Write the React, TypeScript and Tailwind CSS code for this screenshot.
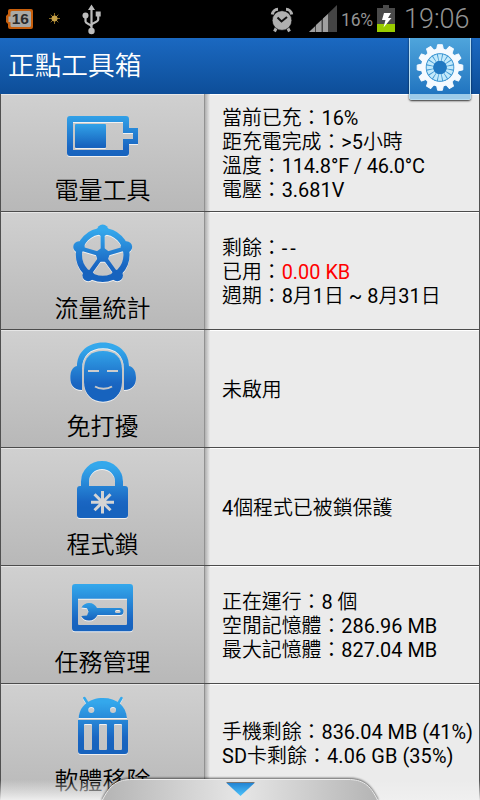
import type { ReactNode } from 'react'

const Icon = ({ children }: { children: ReactNode }) => (
  <svg width="80" height="66" viewBox="0 0 80 66" className="block drop-shadow-[0_1px_0_rgba(255,255,255,0.75)]">
    {children}
  </svg>
)

const Grad = () => (
  <svg width="0" height="0" className="absolute">
    <defs>
      <linearGradient id="blue" gradientUnits="userSpaceOnUse" x1="0" y1="6" x2="0" y2="48">
        <stop offset="0" stopColor="#34a8ec" />
        <stop offset="0.85" stopColor="#1a66c2" />
        <stop offset="1" stopColor="#1763be" />
      </linearGradient>
      <linearGradient id="blueFill" gradientUnits="userSpaceOnUse" x1="0" y1="16" x2="0" y2="40">
        <stop offset="0" stopColor="#34a8ec" />
        <stop offset="1" stopColor="#1763be" />
      </linearGradient>
      <linearGradient id="blueTool" gradientUnits="userSpaceOnUse" x1="0" y1="25" x2="0" y2="42">
        <stop offset="0" stopColor="#2f9fe6" />
        <stop offset="1" stopColor="#1763be" />
      </linearGradient>
    </defs>
  </svg>
)

const BatteryIcon = () => (
  <Icon>
    <path fill="url(#blue)" fillRule="evenodd" d="M7 10H63a3 3 0 0 1 3 3V22H75V38H66V47a3 3 0 0 1-3 3H7a3 3 0 0 1-3-3V13a3 3 0 0 1 3-3ZM10 16V44H60V33H70V27H60V16Z" />
    <rect x="12" y="18" width="31" height="24" rx="1" fill="url(#blueFill)" />
  </Icon>
)

const knobs = [[39.7, 6.3], [16, 23], [63.4, 23], [25.2, 51.5], [54.2, 51.5]]

const WheelIcon = () => (
  <Icon>
    <circle cx="39.7" cy="31" r="23.8" fill="none" stroke="url(#blue)" strokeWidth="6.2" />
    {knobs.map(([x, y]) => <circle key={`${x}-${y}`} cx={x} cy={y} r="5.8" fill="url(#blue)" />)}
    <path d="M39.7 31 39.6 8M39.7 31 16 24M39.7 31 63.4 24M39.7 31 25 51.5M39.7 31 54.4 51.5" stroke="url(#blue)" strokeWidth="4.2" fill="none" />
    <path d="M39.7 23 47.2 28.6 44.4 37.8H35L32.2 28.6Z" fill="url(#blue)" />
  </Icon>
)

const HeadphoneIcon = () => (
  <Icon>
    <path fill="url(#blue)" d="M14 24C14 10 25 .5 40 .5S66 10 66 24C71 25 73 30 73 36S70 48 61 48V27C61 14 53 6.3 40 6.3S19 14 19 27V48C10 48 7.3 42 7.3 36S9 25 14 24Z" />
    <path fill="url(#blue)" d="M21 28C21 15 28 9 40 9S59 15 59 28V40C59 52 51 59.7 40 59.7S21 52 21 40Z" />
    <path d="M25 29H36M44 29H55" stroke="#cdcdcd" strokeWidth="2" />
    <path d="M32 44.5C36.5 47.5 44.5 47.5 49 44.5" stroke="#c8c8c8" strokeWidth="2" fill="none" />
  </Icon>
)

const LockIcon = () => (
  <Icon>
    <path d="M22 28V21.500a17 16.500 0 0 1 34 0V28" fill="none" stroke="url(#blue)" strokeWidth="8" />
    <rect x="14" y="26" width="51" height="32" rx="3" fill="url(#blue)" />
    <path d="M39.500 31V53.500M28 42.300H51M31.500 34.300 47.500 50.300M47.500 34.300 31.500 50.300" stroke="#d4d4d4" strokeWidth="3" />
  </Icon>
)

const TaskIcon = () => (
  <Icon>
    <path fill="url(#blue)" fillRule="evenodd" d="M12 6H67a3 3 0 0 1 3 3V50.300a3 3 0 0 1-3 3H12a3 3 0 0 1-3-3V9a3 3 0 0 1 3-3ZM15 20.700V46a1 1 0 0 0 1 1H63a1 1 0 0 0 1-1V20.700Z" />
    <path fill="url(#blueTool)" fillRule="evenodd" d="M18.500 29.500C20 26.500 23 25 26 25C30 25 32.500 27 34 30H57a3.500 3.500 0 0 1 0 7H34.500C33 40.500 30 42.500 26 42.500C22.500 42.500 19.500 41 18.300 38L24 37.500 25.500 33.700 24 30.200ZM53.500 32a1.500 1.500 0 0 0 0 3H56a1.500 1.500 0 0 0 0-3Z" />
  </Icon>
)

const AndroidIcon = () => (
  <Icon>
    <path fill="url(#blue)" fillRule="evenodd" d="M15.700 22C16.500 10 26 2 40 2S63 10 64 22ZM28.300 11a3 3 0 1 0 0 6 3 3 0 0 0 0-6ZM50 11a3 3 0 1 0 0 6 3 3 0 0 0 0-6Z" />
    <path d="M21.300 2 25 8M58.500 2 55 8" stroke="url(#blue)" strokeWidth="2.600" strokeLinecap="round" />
    <path fill="url(#blue)" fillRule="evenodd" d="M15 24H65V55a3 3 0 0 1-3 3H18a3 3 0 0 1-3-3ZM22 28a1 1 0 0 0-1 1V53a1 1 0 0 0 1 1H28a1 1 0 0 0 1-1V29a1 1 0 0 0-1-1ZM37 28a1 1 0 0 0-1 1V53a1 1 0 0 0 1 1H43a1 1 0 0 0 1-1V29a1 1 0 0 0-1-1ZM52 28a1 1 0 0 0-1 1V53a1 1 0 0 0 1 1H58a1 1 0 0 0 1-1V29a1 1 0 0 0-1-1Z" />
  </Icon>
)

// Les caractères latins restent en graisse normale, le chinois est plus fin
const Mixed = ({ text }: { text: string }) => (
  <>
    {text.split(/([\x20-\x7e°]+)/).map((part, i) =>
      i % 2 ? <span key={i} className="font-normal">{part}</span> : part
    )}
  </>
)

const rows: { label: string; icon: ReactNode; lines: ReactNode[] }[] = [
  {
    label: '電量工具',
    icon: <BatteryIcon />,
    lines: [
      <Mixed text="當前已充：16%" />,
      <Mixed text="距充電完成：>5小時" />,
      <>溫度：<span className="font-normal tracking-[-0.15px]">114.8°F / 46.0°C</span></>,
      <Mixed text="電壓：3.681V" />,
    ],
  },
  {
    label: '流量統計',
    icon: <WheelIcon />,
    lines: [
      <>剩餘：<span className="font-normal tracking-[3px]">--</span></>,
      <>已用：<span className="font-normal text-[#ff0000]">0.00 KB</span></>,
      <Mixed text="週期：8月1日 ~ 8月31日" />,
    ],
  },
  { label: '免打擾', icon: <HeadphoneIcon />, lines: ['未啟用'] },
  { label: '程式鎖', icon: <LockIcon />, lines: [<Mixed text="4個程式已被鎖保護" />] },
  {
    label: '任務管理',
    icon: <TaskIcon />,
    lines: [<Mixed text="正在運行：8 個" />, <Mixed text="空閒記憶體：286.96 MB" />, <Mixed text="最大記憶體：827.04 MB" />],
  },
  {
    label: '軟體移除',
    icon: <AndroidIcon />,
    lines: [
      <Mixed text="手機剩餘：836.04 MB (41%)" />,
      <span className="tracking-[0.1px]"><Mixed text="SD卡剩餘：4.06 GB (35%)" /></span>,
    ],
  },
]

const teeth = Array.from({ length: 12 }, (_, i) => i * 30)
const blades = Array.from({ length: 16 }, (_, i) => i * 22.5)

function StatusBar() {
  return (
    <div className="flex h-[38px] items-center bg-black text-[#939393]">
      {/* batterie, luminosité, usb */}
      <svg width="110" height="38" viewBox="0 0 110 38">
        <path d="M10 9H31a2 2 0 0 1 2 2V27a2 2 0 0 1-2 2H10a2 2 0 0 1-2-2V24L6 22V16L8 14V11a2 2 0 0 1 2-2Z" fill="#c85f0c" />
        <path d="M12 11H29.500a1.500 1.500 0 0 1 1.500 1.500V25.500a1.500 1.500 0 0 1-1.500 1.500H12a1.500 1.500 0 0 1-1.500-1.500V22H8.500V16.500H10.500V12.500A1.500 1.500 0 0 1 12 11Z" fill="#aaa9a5" />
        <text x="20.300" y="24.300" textAnchor="middle" fontSize="15.500" className="font-['Liberation_Sans',sans-serif] font-bold" fill="#2b2b2b">16</text>
        <path d="M54.500 13V24M49 18.500H60M50.700 14.700 58.300 22.300M58.300 14.700 50.700 22.300" stroke="#8a6b22" strokeWidth="1" />
        <circle cx="54.500" cy="18.500" r="3" fill="#c7a24a" />
        <g stroke="#bcbcbc" strokeWidth="2.200" fill="none">
          <path d="M91.500 9V30M85.500 17V21.500C85.500 24 91.500 24 91.500 27M98.200 15V19.500C98.200 22.500 91.500 22.500 91.500 25.500" />
        </g>
        <path d="M91.500 4.500 95 10H88ZM95.700 11.500H100.700V16.500H95.700Z" fill="#bcbcbc" />
        <circle cx="85.500" cy="15.500" r="3" fill="#bcbcbc" />
        <circle cx="91.500" cy="31" r="3.200" fill="#bcbcbc" />
      </svg>
      <svg width="70" height="38" viewBox="0 0 70 38" className="ml-[159px]">
        {/* réveil */}
        <g fill="none" stroke="#b0b0b0">
          <path d="M3.300 14.500A6 6 0 0 1 9 9.300M22.700 14.500A6 6 0 0 0 17 9.300" strokeWidth="3" />
          <path d="M7.500 27.500 5.500 31.500M18.500 27.500 20.500 31.500" strokeWidth="3" />
        </g>
        <circle cx="13" cy="20.500" r="9.800" fill="#b0b0b0" stroke="#000" strokeWidth="0.600" />
        <path d="M8.500 17.500 12.500 21.500 18 17" fill="none" stroke="#111" strokeWidth="2" />
        {/* réseau */}
        <path d="M40 32 68 5V32Z" fill="#444" />
        <path d="M40 32 46 26.500V32ZM47 32V25L52.500 20V32ZM54 32V18.500L59 14V32Z" fill="#a0a0a0" />
      </svg>
      <span className="ml-[2px] w-[36px] pt-[2px] text-[17.500px] tracking-[-0.2px]">16%</span>
      <svg width="18" height="28" viewBox="0 0 18 28" className="mt-[-1px]">
        <path d="M6 0H12V3H18V27H0V3H6Z" fill="#4a4a4a" />
        <path d="M0 19H18V27H0Z" fill="#99cc00" />
        <path d="M7 8H14L11 13H14.500L6.500 22.500 8.500 15H5Z" fill="#fff" />
      </svg>
      <span className="ml-[9px] text-[27px] leading-none font-light">19:06</span>
    </div>
  )
}

function SettingsButton() {
  return (
    <div className="absolute top-0 right-[9px] h-[62px] w-[62px] rounded-b-[3px] border border-t-0 border-[#b6dcf2] bg-linear-to-b from-[#4fa5dc] to-[#1c70bd] shadow-[0_1px_2px_rgba(0,0,0,0.8)]">
      <div className="absolute inset-x-0 bottom-0 h-[5px] bg-[#9dcbe9]" />
      <svg width="60" height="60" viewBox="-30 -29.500 60 60" className="absolute top-0 left-0">
        {teeth.map(a => (
          <path key={a} d="M-3.600-17-2.400-22.800H2.400L3.600-17Z" fill="#f5faff" stroke="#f5faff" strokeLinejoin="round" transform={`rotate(${a})`} />
        ))}
        <circle r="16.500" fill="none" stroke="#f5faff" strokeWidth="5" />
        <circle r="14.300" fill="#3e97d3" />
        {blades.map(a => (
          <path key={a} d="M-1-6.500-2.100-13.300H2.100L1-6.500Z" fill="#c4eafb" transform={`rotate(${a})`} />
        ))}
        <circle r="6.800" fill="#2179c2" />
      </svg>
    </div>
  )
}

export default function App() {
  return (
    <div className="relative flex h-[800px] w-[480px] flex-col overflow-hidden bg-[#ebebeb] font-[Roboto,'Noto_Sans_CJK_TC',sans-serif] text-black">
      <Grad />
      <StatusBar />
      <header className="relative z-10 flex h-14 shrink-0 items-center bg-linear-to-b from-[#1b69c1] to-[#0d4e99] pt-px pl-2">
        <h1 className="text-[26.700px] leading-none font-[350] text-white">正點工具箱</h1>
        <SettingsButton />
      </header>

      <main className="flex flex-col border-x border-[#505050]">
        {rows.map(r => (
          <div key={r.label} className="flex h-[118px] shrink-0 border-b border-[#4c4c4c]">
            <div className="flex w-[203px] shrink-0 flex-col items-center border-t border-[#e6e6e6] bg-linear-to-b from-[#d0d0d0] to-[#b8b8b8] pt-[11px]">
              {r.icon}
              <span className="pt-px text-2xl leading-9 font-[350]">{r.label}</span>
            </div>
            <div className="w-[6px] shrink-0 border-l border-[#919191] bg-linear-to-r from-[#b0b0b0] to-[#ebebeb]" />
            <div className="flex flex-1 flex-col justify-center border-t border-white pt-[3px] pl-[12px] text-[19.900px] leading-6 font-[350] whitespace-nowrap">
              {r.lines.map((l, i) => <p key={i}>{l}</p>)}
            </div>
          </div>
        ))}
      </main>

      {/* Tiroir du bas */}
      <div className="absolute inset-x-0 bottom-0 h-[26px]">
        <svg width="480" height="26" viewBox="0 0 480 26">
          <defs>
            <linearGradient id="fade" x1="0" y1="0" x2="0" y2="1">
              <stop offset="0" stopColor="#f0f0f0" stopOpacity="0" />
              <stop offset="1" stopColor="#f0f0f0" stopOpacity="0.950" />
            </linearGradient>
            <linearGradient id="tab" x1="0" y1="0" x2="1" y2="0">
              <stop offset="0" stopColor="#b4b4b4" />
              <stop offset="0.500" stopColor="#e6e6e6" />
              <stop offset="1" stopColor="#b4b4b4" />
            </linearGradient>
            <linearGradient id="arrow" x1="0" y1="0" x2="0" y2="1">
              <stop offset="0" stopColor="#2384d3" />
              <stop offset="1" stopColor="#4cc3fb" />
            </linearGradient>
          </defs>
          <rect y="6" width="480" height="20" fill="url(#fade)" />
          <path d="M102 27C110 10 118 5.500 132 5.500H348C362 5.500 370 10 378 27Z" fill="url(#tab)" stroke="#eeeeee" className="drop-shadow-[0_-1px_1px_rgba(0,0,0,0.6)]" />
          <path d="M226.500 9H254.500L240.500 22Z" fill="url(#arrow)" />
          <path d="M226.500 8.500H254.500" stroke="#777" />
        </svg>
      </div>
    </div>
  )
}
